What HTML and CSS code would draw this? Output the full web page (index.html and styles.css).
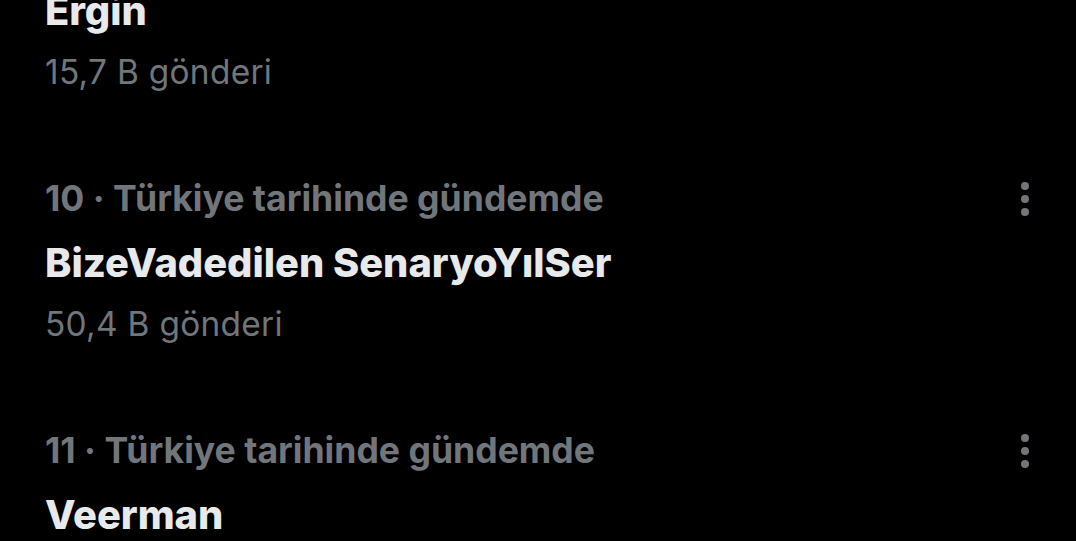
FILE: index.html
```html
<!DOCTYPE html>
<html lang="tr">
<head>
<meta charset="utf-8">
<link rel="stylesheet" href="styles.css">
</head>
<body>
<div class="list">
  <div class="trend">
    <div class="body">
      <div class="meta">9 · Türkiye tarihinde gündemde</div>
      <div class="title">Ergin</div>
      <div class="count">15,7 B gönderi</div>
    </div>
    <div class="more"><span></span><span></span><span></span></div>
  </div>
  <div class="trend">
    <div class="body">
      <div class="meta">10 · Türkiye tarihinde gündemde</div>
      <div class="title">BizeVadedilen SenaryoYılSer</div>
      <div class="count">50,4 B gönderi</div>
    </div>
    <div class="more"><span></span><span></span><span></span></div>
  </div>
  <div class="trend">
    <div class="body">
      <div class="meta">11 · Türkiye tarihinde gündemde</div>
      <div class="title">Veerman</div>
      <div class="count">22,1 B gönderi</div>
    </div>
    <div class="more"><span></span><span></span><span></span></div>
  </div>
</div>
</body>
</html>
```
FILE: styles.css
```css
html, body {
  margin: 0;
  padding: 0;
  background: #000;
  height: 100%;
  overflow: hidden;
}
body {
  font-family: Inter, Roboto, "Noto Sans", sans-serif;
}
.list {
  margin-top: -116px;
}
.trend {
  height: 252px;
  box-sizing: border-box;
  padding: 31px 43px 0 45px;
  display: flex;
  justify-content: space-between;
  align-items: flex-start;
}
.body {
  display: flex;
  flex-direction: column;
}
.meta, .title, .count {
  height: 63px;
  line-height: 63px;
  white-space: nowrap;
}
.meta {
  color: #71767b;
  font-size: 35.6px;
  font-weight: 700;
}
.title {
  color: #e7e9ea;
  font-size: 39.8px;
  font-weight: 800;
  line-height: 65px;
}
.count {
  color: #71767b;
  font-size: 33.4px;
  font-weight: 400;
  letter-spacing: 0.3px;
}
.more {
  display: flex;
  flex-direction: column;
  gap: 5px;
  padding-top: 15px;
  align-items: center;
  width: 16px;
}
.more span {
  width: 8px;
  height: 8px;
  border-radius: 50%;
  background: #71767b;
}
```
